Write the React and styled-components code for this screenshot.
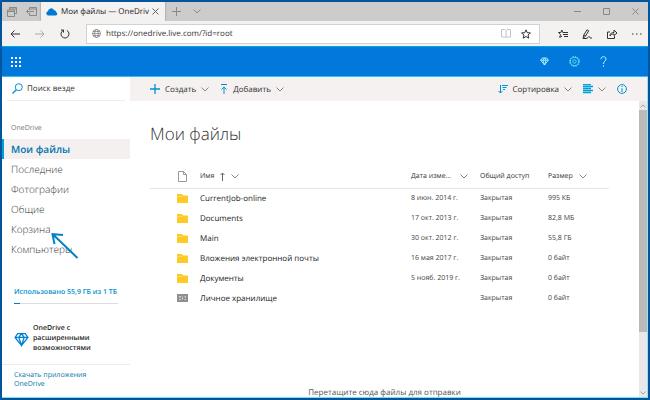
import React, { useState } from 'react';
import styled, { createGlobalStyle } from 'styled-components';

const navItems = ['Мои файлы', 'Последние', 'Фотографии', 'Общие', 'Корзина', 'Компьютеры'];

const files = [
  { name: 'CurrentJob-online', date: '8 июн. 2014 г.', size: '995 КБ' },
  { name: 'Documents', date: '17 окт. 2013 г.', size: '82,8 МБ' },
  { name: 'Main', date: '30 окт. 2012 г.', size: '55,8 ГБ' },
  { name: 'Вложения электронной почты', date: '16 мая 2017 г.', size: '0 байт' },
  { name: 'Документы', date: '5 нояб. 2019 г.', size: '0 байт' },
  { name: 'Личное хранилище', date: '', size: '0 байт', vault: true },
];

const Icon = ({ w = 12, h = w, box = `0 0 ${w} ${h}`, sw = 1, children }) => (
  <svg width={w} height={h} viewBox={box} fill="none" stroke="currentColor" strokeWidth={sw} aria-hidden="true">
    {children}
  </svg>
);

const Chevron = ({ w = 8, up }) => (
  <Icon w={w} h={w / 2 + 1} box="0 0 8 5">
    <path d={up ? 'M.5 4.500 4 1l3.500 3.500' : 'M.5.500 4 4 7.500.500'} stroke="#888" />
  </Icon>
);

const Diamond = ({ w, sw }) => (
  <Icon w={w} h={w} box="0 0 14 14" sw={sw}>
    <path d="M3.500 1.500h7L13 5 7 12.500 1 5zM1 5h12M4.500 5 7 12.500 9.500 5M4.500 5 7 1.500 9.500 5" />
  </Icon>
);

const Folder = () => (
  <svg width="11" height="9" viewBox="0 0 11 9" aria-hidden="true">
    <path d="M0 0h5l1 1.500h5V9H0z" fill="#ffca28" />
    <path d="M0 2.500h5l1-1" fill="none" stroke="#ffe083" strokeWidth=".6" />
  </svg>
);

const Vault = () => (
  <svg width="11" height="8" viewBox="0 0 11 8" aria-hidden="true">
    <path d="M0 0h11v8H0z" fill="#8f8f8f" />
    <path d="M2 2h2v1.500H2zM2 5h2v1H2zM5 2.500h1v3H5zM7.500 2H9v1.500H7.500zM7.500 5H9v1H7.500z" fill="#d2d2d2" />
  </svg>
);

const App = () => {
  const [active, setActive] = useState('Мои файлы');
  const [url, setUrl] = useState('https://onedrive.live.com/?id=root');

  return (
    <Frame>
      <GlobalStyle />
      <TabStrip>
        <TabTools>
          <IconButton aria-label="Отложенные вкладки">
            <Icon w={10}><path d="M2.500 2.500v-2h7v6h-2M.5 3h7v6.500h-7zM.5 4.500h7M2.500 2h7" /></Icon>
          </IconButton>
          <IconButton aria-label="Отложить вкладки">
            <Icon w={11} h={9}><path d="M3.500 3V.5h7v8h-7V6M3.500 2h7M8 4.500H.5M2.500 2.500l-2 2 2 2" /></Icon>
          </IconButton>
        </TabTools>
        <Tab>
          <svg width="12" height="8" viewBox="0 0 12 8" aria-hidden="true">
            <path d="M2.300 7.500a2.200 2.200 0 0 1-.4-4.300A3.300 3.300 0 0 1 8 2a2.700 2.700 0 0 1 2.200 2.300 1.700 1.700 0 0 1-.2 3.200z" fill="#0078d4" />
          </svg>
          <TabTitle>Мои файлы — OneDriv</TabTitle>
          <IconButton aria-label="Закрыть вкладку" $color="#666">
            <Icon w={7}><path d="m.5.5 6 6m0-6-6 6" /></Icon>
          </IconButton>
        </Tab>
        <NewTab>
          <IconButton aria-label="Новая вкладка"><Icon w={9}><path d="M4.500 0v9M0 4.500h9" /></Icon></IconButton>
          <IconButton aria-label="Просмотр вкладок"><Chevron /></IconButton>
        </NewTab>
        <WindowButtons>
          <IconButton aria-label="Свернуть"><Icon w={7}><path d="M0 3.500h7" /></Icon></IconButton>
          <IconButton aria-label="Развернуть"><Icon w={7}><path d="M.5.5h6v6h-6z" /></Icon></IconButton>
          <IconButton aria-label="Закрыть"><Icon w={7}><path d="m.5.5 6 6m0-6-6 6" /></Icon></IconButton>
        </WindowButtons>
      </TabStrip>

      <AddressBar>
        <History>
          <IconButton aria-label="Назад"><Icon w={10} h={8}><path d="M10 4H1M4.500.5 1 4l3.500 3.500" /></Icon></IconButton>
          <IconButton aria-label="Вперёд" $color="#aaa"><Icon w={10} h={8}><path d="M0 4h9M5.500.5 9 4 5.500 7.500" /></Icon></IconButton>
          <IconButton aria-label="Обновить">
            <Icon w={10}><path d="M3.200 1.400a4 4 0 1 0 3.600 0M3.500 3.600V1H1" /></Icon>
          </IconButton>
        </History>
        <AddressField>
          <Icon w={9}>
            <g stroke="#777" strokeWidth=".7">
              <circle cx="4.500" cy="4.500" r="4" />
              <ellipse cx="4.500" cy="4.500" rx="1.800" ry="4" />
              <path d="M.5 4.500h8M1 2.500h7M1 6.500h7" />
            </g>
          </Icon>
          <UrlInput aria-label="Адрес" value={url} onChange={(e) => setUrl(e.target.value)} />
          <IconButton aria-label="Режим чтения" $color="#c4c4c4">
            <Icon w={10} h={9}><path d="M5 1.500v6.500M5 1.500 4 .5H.5v7.500H4l1 .5 1-.5h3.500V.5H6z" /></Icon>
          </IconButton>
          <IconButton aria-label="В избранное">
            <Icon w={10}><path d="m5 .8 1.200 2.900 3.200.2L7 6l.8 3.200L5 7.500 2.200 9.200 3 6 .6 3.900l3.200-.2z" /></Icon>
          </IconButton>
        </AddressField>
        <BrowserTools>
          <IconButton aria-label="Избранное">
            <Icon w={10}><path d="M6 3.500H4.800L3.800 1 2.800 3.500H.5l2 2-.8 3L4 7M6 3.500h4M5 5.500h5M6 7.500h4" /></Icon>
          </IconButton>
          <IconButton aria-label="Заметки">
            <Icon w={11} h={10}><path d="M1 9.500 1.800 6 5 .8l1.700 1L3.500 7.200 1 9.500h3c2 0 2-2 3-2s.5 1.500 1.500 1.500H10M2 6l1.500 1" /></Icon>
          </IconButton>
          <IconButton aria-label="Поделиться">
            <Icon w={11} h={10}><path d="M3 3H.5v6.500h7V7M3 7c0-3 2-3.500 4-3.500V1L10 4 7 6.500V5C5 5 4 5.500 3 7z" /></Icon>
          </IconButton>
          <IconButton aria-label="Ещё">
            <Icon w={10} h={2}><path d="M0 1h1.500M4 1h1.500M8 1h1.500" /></Icon>
          </IconButton>
        </BrowserTools>
      </AddressBar>

      <SuiteBar>
        <IconButton aria-label="Средство запуска приложений" $color="#fff">
          <Icon w={10} sw={2}>
            <path d="M0 1h10M0 5h10M0 9h10" strokeDasharray="2 2" />
          </Icon>
        </IconButton>
        <SuiteTools>
          <IconButton aria-label="Premium" $color="#b5f4ff"><Diamond w={9} sw={1.4} /></IconButton>
          <IconButton aria-label="Параметры" $color="#62ddf5">
            <Icon w={11}>
              <circle cx="5.500" cy="5.500" r="4.200" />
              <circle cx="5.500" cy="5.500" r="1.700" />
              <circle cx="5.500" cy="5.500" r="5" strokeDasharray="1.300 1.300" />
            </Icon>
          </IconButton>
          <IconButton aria-label="Справка" $color="#b5f4ff">
            <Icon w={7} h={11}><path d="M1 3.200C1 1.500 2 .7 3.500.7S6 1.600 6 3c0 2-2.500 2.200-2.500 5M3.500 9.300v1.500" /></Icon>
          </IconButton>
        </SuiteTools>
      </SuiteBar>

      <Body>
        <Sidebar>
          <Search>
            <Icon w={11}><circle cx="6.800" cy="4.200" r="3.500" stroke="#0091d2" /><path d="M4.300 6.700.5 10.500" stroke="#0091d2" strokeWidth="1.300" /></Icon>
            <SearchInput aria-label="Поиск везде" placeholder="Поиск везде" />
          </Search>
          <SectionLabel>OneDrive</SectionLabel>
          <nav>
            {navItems.map((item) => (
              <NavLink key={item} href="#" $active={item === active} onClick={() => setActive(item)}>
                {item}
              </NavLink>
            ))}
          </nav>
          <Pointer>
            <Icon w={28} h={28} sw={2}><path d="M26.500 26 1.500 2M12 3 1.500 2l2 10" /></Icon>
          </Pointer>
          <Quota>
            <QuotaLink href="#">Использовано 55,9 ГБ из 1 ТБ</QuotaLink>
            <QuotaBar><QuotaFill /></QuotaBar>
          </Quota>
          <Upsell href="#">
            <Diamond w={15} sw={1.2} />
            <span>OneDrive с расширенными возможностями</span>
          </Upsell>
          <GetApps>
            <AppsLink href="#">Скачать приложения OneDrive</AppsLink>
          </GetApps>
        </Sidebar>

        <Main>
          <CommandBar>
            <Command>
              <Icon w={10}><path d="M5 0v10M0 5h10" stroke="#0091d2" strokeWidth="1.300" /></Icon>
              Создать
              <Chevron />
            </Command>
            <Command>
              <Icon w={8} h={10}><path d="M1 .5h6M4 10V3M1.500 5.500 4 3l2.500 2.500" stroke="#0091d2" /></Icon>
              Добавить
              <Chevron />
            </Command>
            <RightCommands>
              <Command>
                <Icon w={10}><path d="M2.500 1v8M.5 7l2 2 2-2M4 1.500h6M4.500 3.500h4M5 5.500h2" stroke="#0091d2" /></Icon>
                Сортировка
                <Chevron />
              </Command>
              <Command aria-label="Вид">
                <Icon w={10}><path d="M0 .5h8M0 2.500h10M0 4.500h8M0 6.500h10M0 8.500h8" stroke="#00a0dc" strokeWidth="1.300" /></Icon>
                <Chevron />
              </Command>
              <Command aria-label="Сведения">
                <Icon w={10}><g stroke="#0091d2"><circle cx="5" cy="5" r="4.400" /><path d="M5 2v1M5 4.200V8" /></g></Icon>
              </Command>
            </RightCommands>
          </CommandBar>

          <Scroller>
            <Content>
              <Title>Мои файлы</Title>
              <FileTable>
                <thead>
                  <tr>
                    <HeadCell $width="50px" $icon aria-label="Тип">
                      <Icon w={9} h={11}><path d="M.5.5h5l3 3v7h-8zM5.500.5v3h3" stroke="#999" /></Icon>
                    </HeadCell>
                    <HeadCell>
                      <HeadLabel>
                        Имя
                        <Icon w={5} h={9}><path d="M2.500 9V1M.5 3l2-2 2 2" stroke="#666" /></Icon>
                        <Chevron />
                      </HeadLabel>
                    </HeadCell>
                    <HeadCell $width="69px"><HeadLabel $spread>Дата изме... <Chevron /></HeadLabel></HeadCell>
                    <HeadCell $width="68px">Общий доступ</HeadCell>
                    <HeadCell $width="61px"><HeadLabel>Размер <Chevron /></HeadLabel></HeadCell>
                  </tr>
                </thead>
                <tbody>
                  {files.map((file) => (
                    <tr key={file.name}>
                      <Cell $icon>{file.vault ? <Vault /> : <Folder />}</Cell>
                      <Cell><FileLink href="#">{file.name}</FileLink></Cell>
                      <Cell>{file.date}</Cell>
                      <Cell>Закрытая</Cell>
                      <Cell>{file.size}</Cell>
                    </tr>
                  ))}
                </tbody>
              </FileTable>
              <DropHint>Перетащите сюда файлы для отправки</DropHint>
            </Content>
            <ScrollTrack>
              <ScrollButton aria-label="Вверх"><Chevron w={6} up /></ScrollButton>
              <ScrollThumb />
              <ScrollSpace />
              <ScrollButton aria-label="Вниз"><Chevron w={6} /></ScrollButton>
            </ScrollTrack>
          </Scroller>
        </Main>
      </Body>
    </Frame>
  );
};

const GlobalStyle = createGlobalStyle`
  * {
    box-sizing: border-box;
  }

  body {
    margin: 0;
    font-family: "Open Sans", "Noto Sans", sans-serif;
    font-size: 8px;
    color: #333;
    text-rendering: geometricPrecision;
  }

  button, input {
    font: inherit;
    color: inherit;
    border: none;
    padding: 0;
    background: none;
    text-rendering: inherit;
  }

  a {
    text-decoration: none;
  }

  svg {
    display: block;
    flex-shrink: 0;
  }
`

const Frame = styled.div`
  display: flex;
  flex-direction: column;
  min-height: 100vh;
  border: 2px solid #00559b;
  background: #fff;
`

const IconButton = styled.button`
  display: flex;
  align-items: center;
  justify-content: center;
  color: ${(props) => props.$color || 'inherit'};
`

const TabStrip = styled.div`
  display: flex;
  height: 19px;
  background: #cccccc;
  color: #888;
`

const TabTools = styled.div`
  display: flex;
  width: 39px;
  padding-left: 5px;
  gap: 9px;
`

const Tab = styled.div`
  display: flex;
  align-items: center;
  width: 124px;
  padding: 0 6px 0 5px;
  gap: 3px;
  background: #f4f2f1;
  box-shadow: 0 0 2px #888;
  clip-path: inset(0 -2px);
  color: #222;
`

const TabTitle = styled.span`
  flex: 1;
  white-space: nowrap;
`

const NewTab = styled.div`
  display: flex;
  padding-left: 7px;
  gap: 12px;
`

const WindowButtons = styled.div`
  display: flex;
  margin-left: auto;
  padding-right: 9px;
  gap: 22px;
`

const AddressBar = styled.div`
  display: flex;
  align-items: center;
  height: 25px;
  background: #f4f2f1;
`

const History = styled.div`
  display: flex;
  width: 84px;
  padding-left: 8px;
  gap: 15px;
`

const AddressField = styled.div`
  display: flex;
  flex: 1;
  align-items: center;
  height: 20px;
  padding: 0 8px 0 5px;
  gap: 5px;
  border: 1px solid #d2d2d2;
  background: #fff;

  button + button {
    margin-left: 5px;
  }
`

const UrlInput = styled.input`
  flex: 1;
  min-width: 0;
  outline: none;
`

const BrowserTools = styled.div`
  display: flex;
  padding: 0 6px 0 18px;
  gap: 14px;
`

const SuiteBar = styled.header`
  display: flex;
  align-items: center;
  justify-content: space-between;
  height: 31px;
  padding: 0 41px 0 9px;
  border-top: 1px solid #00a8dc;
  border-bottom: 1px solid #3db8f0;
  background: #0078dc;
`

const SuiteTools = styled.div`
  display: flex;
  gap: 20px;
`

const Body = styled.div`
  display: flex;
  flex: 1;
  border-right: 1px solid #a5dcf0;
  border-bottom: 1px solid #7fdcf5;
`

const Sidebar = styled.aside`
  position: relative;
  display: flex;
  flex-direction: column;
  width: 128px;
  flex-shrink: 0;
`

const Search = styled.label`
  display: flex;
  align-items: center;
  height: 24px;
  margin: 0 5px;
  padding-left: 5px;
  gap: 4px;
  border-bottom: 1px solid #eeebea;
`

const SearchInput = styled.input`
  width: 90px;
  outline: none;

  &::placeholder {
    color: #333;
    opacity: 1;
  }
`

const SectionLabel = styled.div`
  padding: 22px 9px 4px;
  font-size: 7px;
  line-height: 12px;
  color: #777;
`

const NavLink = styled.a`
  display: block;
  padding-left: ${(props) => (props.$active ? '7px' : '9px')};
  border-left: ${(props) => (props.$active ? '2px solid #00a0dc' : 'none')};
  font-size: 10px;
  font-weight: ${(props) => (props.$active ? 600 : 300)};
  line-height: 20px;
  color: ${(props) => (props.$active ? '#0074ae' : '#333')};
  background: ${(props) => (props.$active ? '#f4f0ef' : 'none')};
`

// стрелка лежит поверх списка
const Pointer = styled.div`
  position: absolute;
  top: 155px;
  left: 49px;
  color: #0082c8;
  pointer-events: none;
`

const Quota = styled.div`
  padding: 29px 12px 20px;
`

const QuotaLink = styled.a`
  display: block;
  font-size: 7px;
  font-weight: 600;
  line-height: 10px;
  white-space: nowrap;
  color: #0091c8;
`

const QuotaBar = styled.div`
  height: 1px;
  margin-top: 5px;
  background: #dddddd;
`

const QuotaFill = styled.div`
  width: 6%;
  height: 1px;
  background: #0078d4;
`

const Upsell = styled.a`
  display: flex;
  align-items: center;
  padding: 0 20px 10px 12px;
  gap: 4px;
  font-size: 7px;
  font-weight: 600;
  line-height: 10px;
  color: #222;

  svg {
    color: #0082d2;
  }
`

const GetApps = styled.div`
  padding: 6px 12px;
  border-top: 1px solid #eeebea;
`

const AppsLink = styled.a`
  display: block;
  font-size: 7px;
  line-height: 9px;
  color: #0078aa;
`

const Main = styled.main`
  display: flex;
  flex: 1;
  flex-direction: column;
  min-width: 0;
`

const CommandBar = styled.div`
  display: flex;
  height: 24px;
  padding: 0 20px;
  gap: 11px;
  background: #f4f1f0;
`

const Command = styled.button`
  display: flex;
  align-items: center;
  gap: 5px;
`

const RightCommands = styled.div`
  display: flex;
  margin-left: auto;
  gap: 11px;
`

const Scroller = styled.div`
  display: flex;
  flex: 1;
`

const Content = styled.section`
  display: flex;
  flex: 1;
  flex-direction: column;
  padding: 21px 30px 0 20px;
`

const Title = styled.h1`
  margin: 0 0 20px;
  font-size: 17px;
  font-weight: 300;
  line-height: 24px;
`

const FileTable = styled.table`
  width: 100%;
  table-layout: fixed;
  border-collapse: collapse;
`

const HeadCell = styled.th`
  width: ${(props) => props.$width || 'auto'};
  height: 22px;
  padding: 0 0 0 ${(props) => (props.$icon ? '28px' : '0')};
  border-bottom: 1px solid #e6e6e6;
  font-size: 7px;
  font-weight: 400;
  text-align: left;
  white-space: nowrap;
`

const HeadLabel = styled.div`
  display: flex;
  align-items: center;
  justify-content: ${(props) => (props.$spread ? 'space-between' : 'flex-start')};
  padding-right: ${(props) => (props.$spread ? '12px' : '0')};
  gap: 6px;
`

const Cell = styled.td`
  height: 20px;
  padding: 0 0 0 ${(props) => (props.$icon ? '27px' : '0')};
  font-size: 7px;
  color: #444;
  white-space: nowrap;
`

const FileLink = styled.a`
  font-size: 8px;
  color: #222;
`

const DropHint = styled.p`
  margin: auto 0 0;
  padding-left: 10px;
  line-height: 8px;
  text-align: center;
  color: #555;
`

const ScrollTrack = styled.div`
  display: flex;
  flex-direction: column;
  width: 8px;
  background: #e8e8e8;
`

const ScrollButton = styled.button`
  display: flex;
  align-items: center;
  justify-content: center;
  height: 9px;
  color: #888;
`

const ScrollThumb = styled.div`
  flex: 4;
  background: #bcbab9;
`

const ScrollSpace = styled.div`
  flex: 1;
`

export default App;
